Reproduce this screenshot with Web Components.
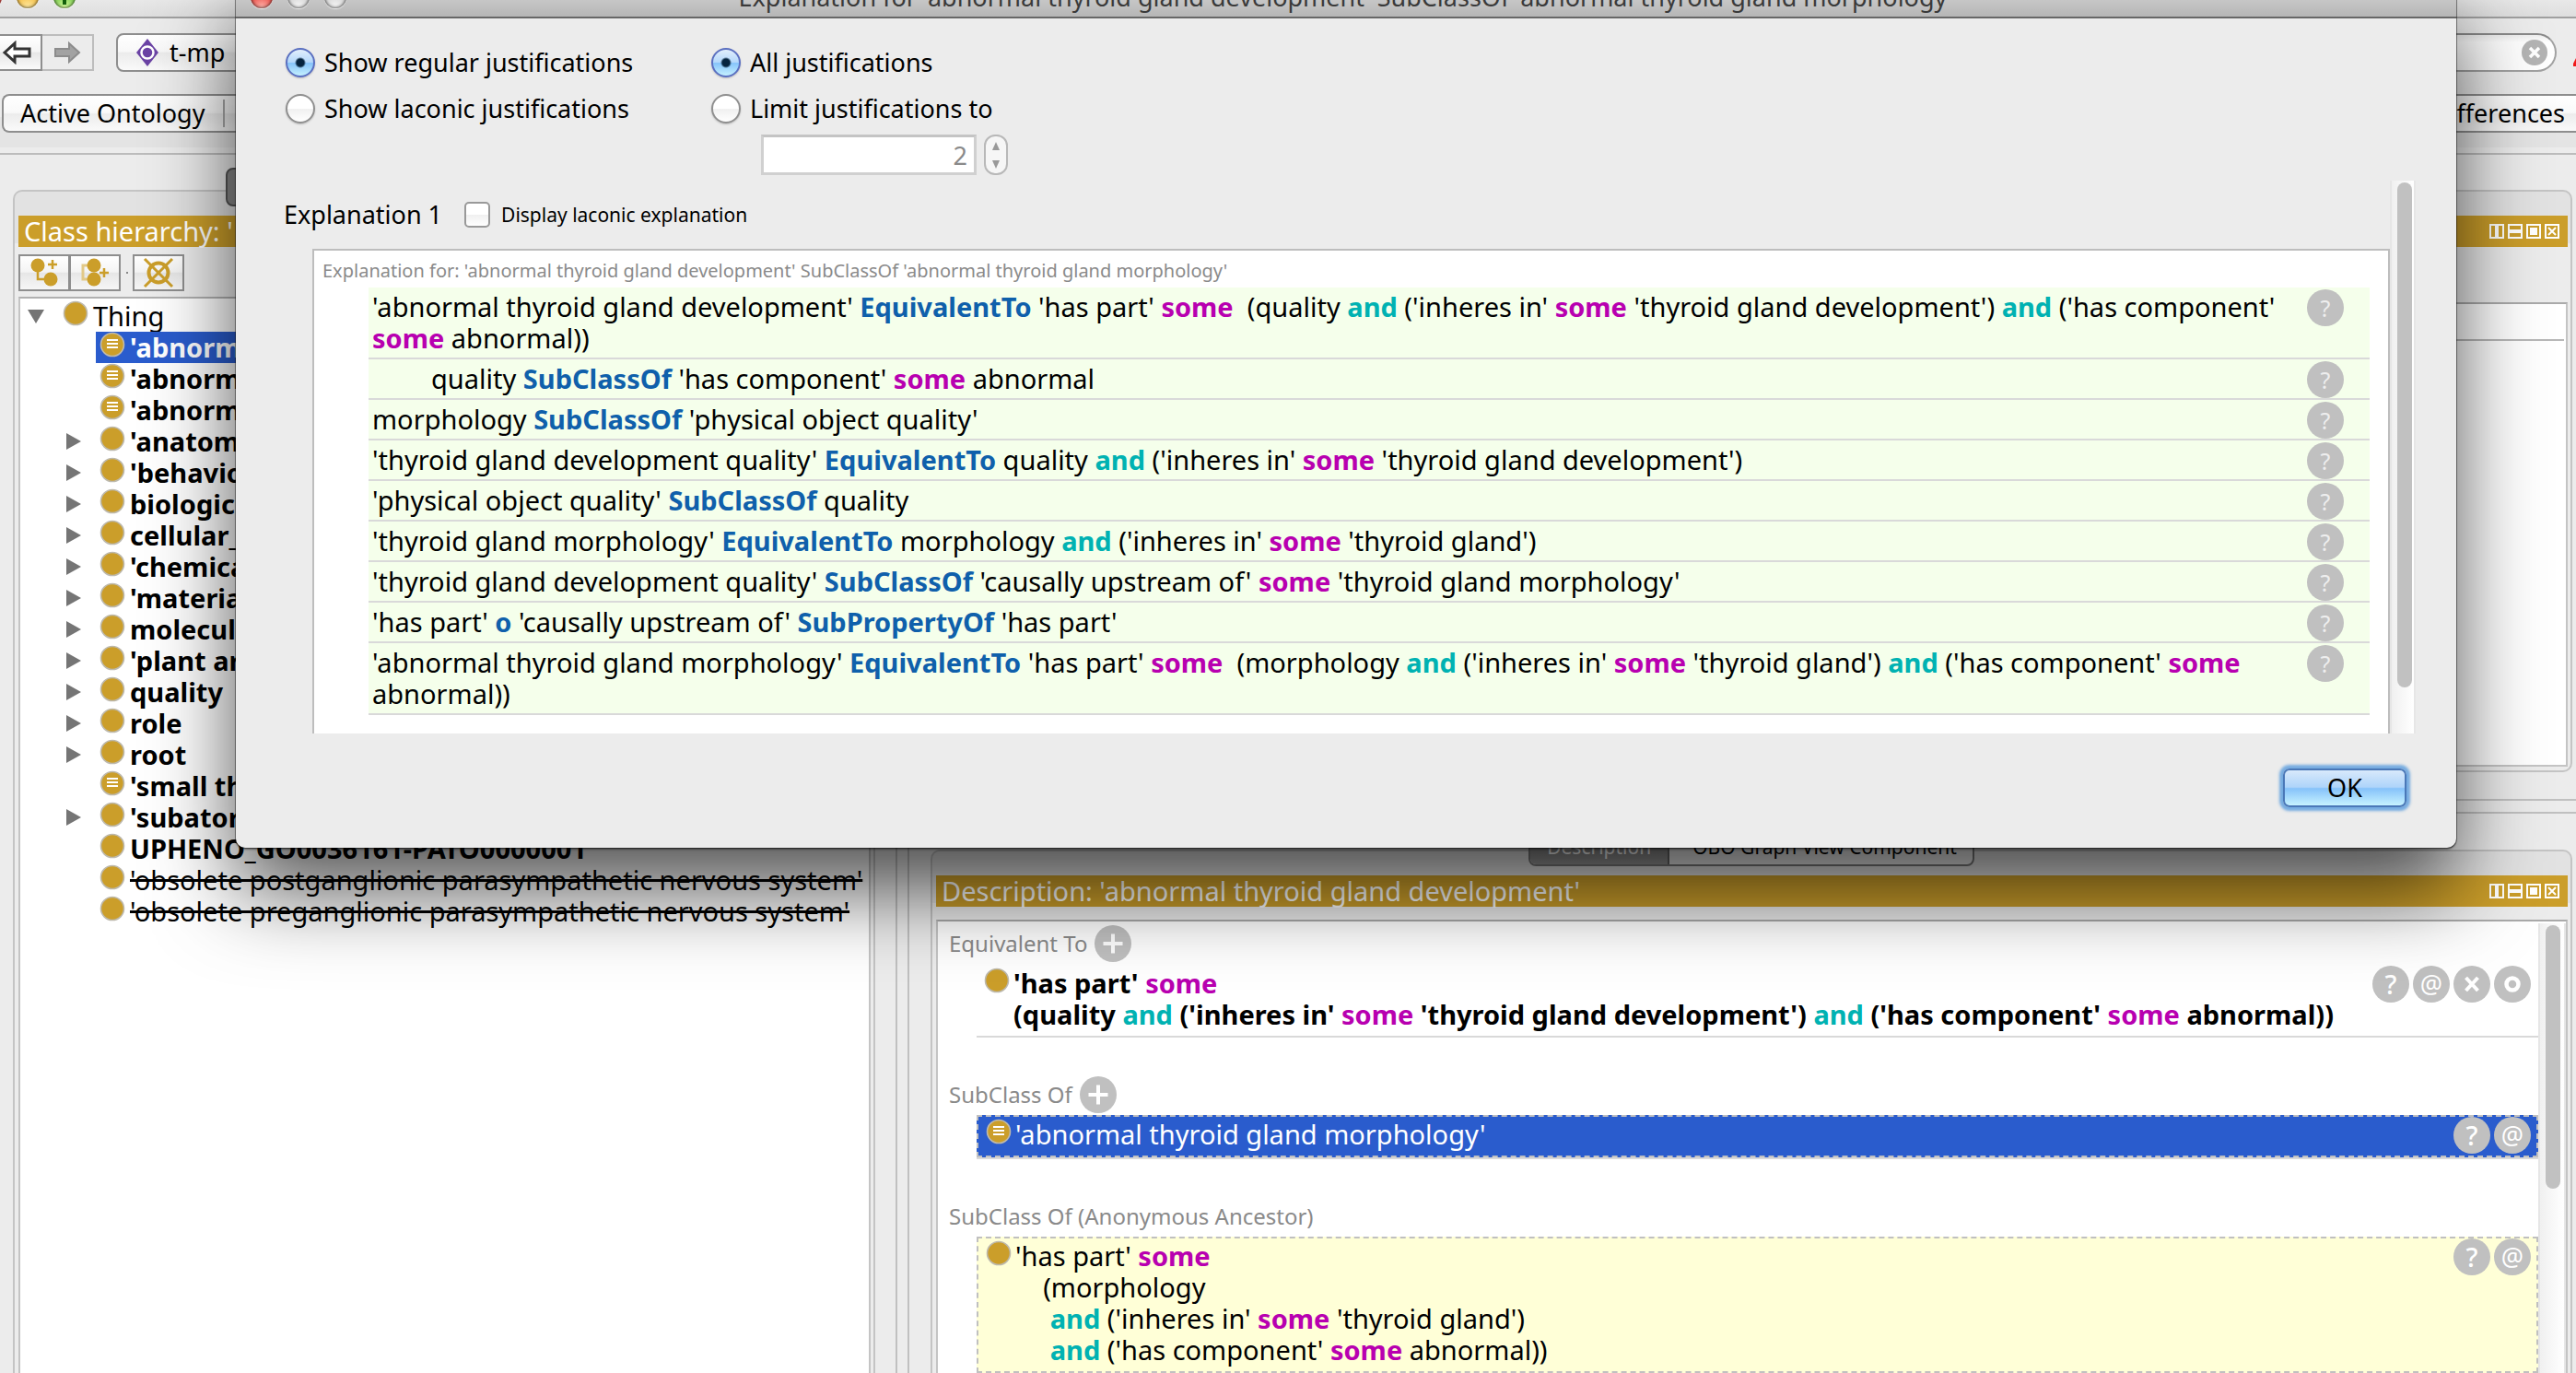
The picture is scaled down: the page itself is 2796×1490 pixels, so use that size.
<!DOCTYPE html>
<html lang="en">
<head>
<meta charset="utf-8">
<title>Ontology editor</title>
<style>
  html, body { margin: 0; height: 100%; overflow: hidden; background: #ececec; }
  body { font-family: "Noto Sans", "Open Sans", sans-serif; font-size: 29px; line-height: 34px; color: #000; }
</style>
</head>
<body>
<ontology-app></ontology-app>

<script>
const define = (name, html, init) => {
  const template = document.createElement('template');
  template.innerHTML = html.trim();
  customElements.define(name, class extends HTMLElement {
    connectedCallback() {
      if (this.shadowRoot) return;
      const root = this.attachShadow({ mode: 'open' });
      const content = template.content.cloneNode(true);
      if (init) init(this, content);
      root.append(content);
    }
  });
};

/* Class marker: a gold disc, with three bars when the class is defined */
define('class-icon', `
<style>
  :host { display: block; flex: none; width: 28px; height: 28px; }
  svg { display: block; }
  .bars { display: none; }
  :host([defined]) .bars { display: block; }
</style>
<svg width="28" height="28" viewBox="0 0 28 28">
  <circle cx="14" cy="14" r="12.5" fill="#cb9e2a" stroke="#bdb9ad" stroke-width="1.6"/>
  <path class="bars" d="M8 9h12M8 13h12M8 17h12" stroke="#fff" stroke-width="2"/>
</svg>`);

/* Class expression with coloured keywords */
define('manchester-text', `
<style>
  :host { display: block; }
  p { margin: 0; white-space: pre-wrap; }
  b { font-weight: 700; }
  .axiom { color: #0f60ab; }
  .some { color: #b800b0; }
  .and { color: #00b2b2; }
</style>
<p></p>`, (host, root) => {
  const out = root.querySelector('p');
  host.getAttribute('expr').split(/\b(EquivalentTo|SubClassOf|SubPropertyOf|some|and|o)\b/).forEach(part => {
    const kind = { EquivalentTo: 'axiom', SubClassOf: 'axiom', SubPropertyOf: 'axiom', o: 'axiom', some: 'some', and: 'and' }[part];
    if (!kind) return out.append(part);
    const b = document.createElement('b');
    b.className = kind;
    b.textContent = part;
    out.append(b);
  });
});

/* Round grey action button */
define('round-button', `
<style>
  :host { display: block; flex: none; width: 40px; height: 40px; }
  button { all: unset; box-sizing: border-box; width: 40px; height: 40px; border-radius: 50%; background: #c0c0c0; color: #fff;
    display: flex; align-items: center; justify-content: center; font-size: 29px; line-height: 40px; font-weight: 500; }
  :host([kind="note"]) button { font-size: 27px; font-weight: 400; line-height: 40px; }
  :host([light]) button { font-size: 25px; font-weight: 400; color: #eee; }
  svg { display: block; }
</style>
<button type="button"></button>`, (host, root) => {
  const kind = host.getAttribute('kind');
  const b = root.querySelector('button');
  const icons = {
    add: '<path d="M20 9.500v21M9.500 20h21" stroke-width="4"/>',
    remove: '<path d="M13.500 13l13 14M26.500 13l-13 14" stroke-width="4"/>',
    edit: '<circle cx="20" cy="20" r="6.500" stroke-width="4.500"/>'
  };
  b.setAttribute('aria-label', { help: 'Explain', note: 'Annotate', add: 'Add', remove: 'Remove', edit: 'Edit' }[kind]);
  if (icons[kind]) b.innerHTML = '<svg width="40" height="40" viewBox="0 0 40 40" fill="none" stroke="#fff">' + icons[kind] + '</svg>';
  else b.textContent = kind === 'help' ? '?' : '@';
});

define('traffic-lights', `
<style>
  :host { display: flex; gap: 16px; }
  i { width: 24px; height: 24px; border-radius: 50%; box-sizing: border-box; box-shadow: inset 0 0 3px 1px rgba(0,0,0,.55), 0 1px 1px rgba(255,255,255,.7); }
  .r { background: radial-gradient(circle at 50% 95%, #ffb0a8, #e8453f 60%, #b82018); }
  .y { background: radial-gradient(circle at 50% 95%, #ffe9a0, #f3b93a 60%, #b07d12); }
  .g { background: radial-gradient(circle at 50% 95%, #d8ff9c, #6fc447 60%, #3c8a1e); display: flex; justify-content: center; }
  .g::before { content: ""; width: 4px; height: 18px; margin-top: 2px; background: #14600c; }
  .n { background: radial-gradient(circle at 50% 90%, #f4f4f4, #cfcfcf 60%, #aaa); }
</style>
<i class="r"></i><i class="y"></i><i class="g"></i>`, (host, root) => {
  if (host.hasAttribute('modal')) root.querySelectorAll('.y,.g').forEach(n => n.className = 'n');
});

define('tool-bar', `
<style>
  :host { display: flex; align-items: center; padding: 16px 0 0; height: 42px; overflow: hidden; font-size: 27px; }
  .nav { display: flex; margin-left: -10px; margin-right: 24px; }
  .nav button { box-sizing: border-box; width: 56px; height: 40px; padding: 0; border: 2px solid #8e8e8e; background: linear-gradient(#fff, #f4f4f4 48%, #e6e6e6 50%, #fafafa); }
  .nav button:disabled { border-color: #bdbdbd; border-left: 0; background: #ececec; }
  .nav svg { display: block; margin: auto; }
  .project { all: unset; box-sizing: border-box; flex: 1; height: 42px; display: flex; align-items: center; gap: 10px; padding-left: 18px;
    border: 2px solid #8e8e8e; border-radius: 8px; background: linear-gradient(#fff, #f8f8f8 48%, #ebebeb 50%, #fafafa); }
  .search { box-sizing: border-box; width: 600px; height: 42px; margin: 0 18px 0 24px; border: 2px solid #a2a2a2; border-top-color: #8a8a8a; border-radius: 21px;
    display: flex; align-items: center; padding-right: 8px; background: linear-gradient(#eee, #fff 8px); }
  .search input { flex: 1; min-width: 0; border: 0; outline: 0; background: none; }
  .search button { all: unset; display: flex; }
  .warn { flex: none; width: 3px; overflow: hidden; }
</style>
<div class="nav">
  <button aria-label="Back"><svg width="32" height="26" viewBox="0 0 32 26"><path d="M3 13L14 3v6h16v8H14v6z" fill="#fff" stroke="#333" stroke-width="3"/></svg></button>
  <button aria-label="Forward" disabled><svg width="32" height="26" viewBox="0 0 32 26"><path d="M29 13L18 3v6H3v8h15v6z" fill="#a2a2a2" stroke="#8c8c8c" stroke-width="2"/></svg></button>
</div>
<button class="project"><svg width="28" height="32" viewBox="0 0 28 32"><path d="M14 1l12 15-12 15L2 16z" fill="#6b43a5"/><circle cx="14" cy="16" r="6.500" fill="none" stroke="#fff" stroke-width="2.500"/></svg><span>t-mp</span></button>
<div class="search"><input aria-label="Search"><button aria-label="Clear"><svg width="28" height="28" viewBox="0 0 28 28"><circle cx="14" cy="14" r="14" fill="#b4b4b4"/><path d="M9 9l10 10M19 9L9 19" stroke="#fff" stroke-width="3.500"/></svg></button></div>
<svg class="warn" width="3" height="42" viewBox="0 0 3 42"><path d="M0 36V33l3-6v9z" fill="#f01818"/></svg>`);

define('tab-strip', `
<style>
  :host { display: block; margin-top: 24px; height: 64px; border-bottom: 2px solid #bcbcbc; font-size: 27px;
    background: linear-gradient(transparent 25px, #e4e4e4 25px, #e4e4e4 58px, transparent 58px); }
  nav { display: flex; height: 42px; box-sizing: border-box; margin-left: 2px; border: 2px solid #8e8e8e; border-right: 0; border-radius: 8px 0 0 8px;
    background: linear-gradient(#fff, #f9f9f9 48%, #ececec 52%, #fafafa); justify-content: space-between; align-items: center; }
  button { all: unset; padding: 0 18px; line-height: 30px; }
  button:first-of-type { padding-right: 20px; border-right: 2px solid #aaa; }
  button:last-of-type { padding-right: 12px; }
</style>
<nav><button>Active Ontology</button><button>fferences</button></nav>`);

/* Framed view with optional tabs over its top edge and a gold caption */
define('view-panel', `
<style>
  :host { display: flex; flex-direction: column; position: relative; box-sizing: border-box; border: 2px solid #c4c4c4; border-radius: 10px; padding: 26px 3px 4px 4px;
    background: linear-gradient(#e2e2e2 56px, #ececec 56px); min-width: 0; }
  .caption { flex: none; height: 34px; display: flex; align-items: center; padding: 0 9px 0 6px; background: #cb9e2a; color: #fff; white-space: nowrap; }
  .caption span { flex: 1; }
  svg { display: block; flex: none; }
  .tabs { position: absolute; left: 0; right: 0; top: -26px; display: flex; justify-content: center; }
</style>
<div class="tabs"><slot name="tabs"></slot></div>
<div class="caption"><span></span>
<svg width="76" height="16" viewBox="0 0 76 16" fill="none" stroke="#fff" stroke-width="2">
  <path d="M1 1h14v14H1zM21 1h14v14H21zM41 1h14v14H41zM61 1h14v14H61z"/>
  <path d="M8 1v14" stroke-width="4"/><path d="M21 8h14" stroke-width="4"/><path d="M44 4h8v8h-8z" fill="#fff" stroke="none"/><path d="M64 4l8 8M72 4l-8 8"/>
</svg></div>
<slot></slot>`, (host, root) => { root.querySelector('.caption span').textContent = host.getAttribute('caption'); });

define('segment-tabs', `
<style>
  :host { display: flex; border: 2px solid #7a7a7a; border-radius: 8px; overflow: hidden; height: 38px; background: #ececec; font-size: 21px; }
  button { all: unset; box-sizing: border-box; padding: 0 18px; line-height: 34px; white-space: nowrap; }
  button:first-of-type { background: linear-gradient(#6e6e6e, #9c9c9c); color: #fff; border-right: 2px solid #666; }
  button:last-of-type { padding: 0 17px 0 25px; }
</style>
<button>Description</button><button>OBO Graph View Component</button>`);

define('tree-item', `
<style>
  :host { display: flex; height: 34px; align-items: flex-start; white-space: nowrap; font-weight: 700; }
  .arrow { flex: none; width: 34px; height: 34px; margin-left: 48px; }
  .arrow path { fill: #757575; display: none; }
  .body { flex: 1; display: flex; padding-left: 4px; gap: 5px; min-width: 0; }
  :host([root]) { font-weight: 400; }
  :host([root]) .arrow { margin-left: 8px; }
  :host([open]) .down, :host([closed]) .right { display: block; }
  :host([selected]) .body { background: #2a5ccd; color: #fff; }
  :host([obsolete]) { font-weight: 400; }
  :host([obsolete]) span { text-decoration: line-through 3px; }
</style>
<svg class="arrow" viewBox="0 0 34 34"><path class="down" d="M0 10h18l-9 15z"/><path class="right" d="M2 8v18l16-9z"/></svg>
<div class="body"><class-icon></class-icon><span><slot></slot></span></div>`, (host, root) => {
  if (host.hasAttribute('defined')) root.querySelector('class-icon').setAttribute('defined', '');
});

define('class-tree', `
<style>
  :host { display: flex; flex-direction: column; flex: 1; min-height: 0; }
  .bar { display: flex; align-items: center; margin: 8px 0 6px; }
  .bar button { box-sizing: border-box; width: 56px; height: 40px; padding: 0; border: 2px solid #8e8e8e; background: linear-gradient(#fff, #f4f4f4 48%, #e6e6e6 50%, #f6f6f6); }
  .bar button + button { margin-left: -1px; }
  .bar svg { display: block; margin: auto; }
  .dot { width: 2px; height: 2px; margin: 0 5px 0 6px; background: #888; }
  .list { flex: 1; border: 2px solid #b0b0b0; border-color: #b0b0b0 #c4c4c4; border-bottom: 0; background: #fff; padding-top: 2px; overflow: hidden; }
</style>
<div class="bar">
  <button aria-label="Add subclass"><svg width="34" height="34" viewBox="0 0 34 34" fill="#cb9e2a"><circle cx="10" cy="9" r="7.500"/><circle cx="24" cy="24" r="7.500"/><path d="M10 9v15h12M21 8h10M26 3v10" fill="none" stroke="#cb9e2a" stroke-width="2.500"/></svg></button><button aria-label="Add sibling class"><svg width="34" height="34" viewBox="0 0 34 34"><path d="M14 9H4v15h10" fill="none" stroke="#e2c988" stroke-width="3"/><g fill="#cb9e2a"><circle cx="16" cy="9" r="7.500"/><circle cx="16" cy="24" r="7.500"/></g><path d="M22 17h10M27 12v10" fill="none" stroke="#cb9e2a" stroke-width="2.500"/></svg></button>
  <span class="dot"></span>
  <button aria-label="Delete class"><svg width="34" height="34" viewBox="0 0 34 34" fill="none" stroke="#cb9e2a" stroke-width="3"><circle cx="17" cy="17" r="10.500" stroke-width="4"/><path d="M2 2l30 30M32 2L2 32"/></svg></button>
</div>
<div class="list">
  <tree-item root open>Thing</tree-item>
  <tree-item selected defined>'abnorm</tree-item>
  <tree-item defined>'abnorm</tree-item>
  <tree-item defined>'abnorm</tree-item>
  <tree-item closed>'anatom</tree-item>
  <tree-item closed>'behavio</tree-item>
  <tree-item closed>biologic</tree-item>
  <tree-item closed>cellular_</tree-item>
  <tree-item closed>'chemica</tree-item>
  <tree-item closed>'materia</tree-item>
  <tree-item closed>molecul</tree-item>
  <tree-item closed>'plant ar</tree-item>
  <tree-item closed>quality</tree-item>
  <tree-item closed>role</tree-item>
  <tree-item closed>root</tree-item>
  <tree-item defined>'small th</tree-item>
  <tree-item closed>'subator</tree-item>
  <tree-item>UPHENO_GO0036161-PATO0000001</tree-item>
  <tree-item obsolete>'obsolete postganglionic parasympathetic nervous system'</tree-item>
  <tree-item obsolete>'obsolete preganglionic parasympathetic nervous system'</tree-item>
</div>`);

define('scroll-bar', `
<style>
  :host { display: block; flex: none; box-sizing: border-box; width: 30px; padding: 2px 6px; border: 2px solid #e6e6e6; border-width: 0 2px; background: linear-gradient(90deg, #f0f0f0, #fff); }
  div { width: 16px; height: var(--thumb, 50%); border-radius: 8px; background: #c1c1c1; margin: auto; }
</style>
<div></div>`);

define('description-section', `
<style>
  :host { display: block; margin-bottom: 40px; }
  header { display: flex; align-items: center; gap: 8px; height: 44px; padding-left: 12px; color: #8a8a8a; font-size: 24px; }
  .items { padding-left: 42px; }
</style>
<header><span></span></header><div class="items"><slot></slot></div>`, (host, root) => {
  root.querySelector('span').textContent = host.getAttribute('name');
  if (host.hasAttribute('addable')) {
    const add = document.createElement('round-button');
    add.setAttribute('kind', 'add');
    root.querySelector('header').append(add);
  }
});

define('description-item', `
<style>
  :host { display: block; border-bottom: 2px solid #d9d9d9; }
  .row { display: flex; gap: 4px; padding: 2px 8px; }
  class-icon { margin-top: 2px; }
  manchester-text { flex: 1; padding: 2px 0 4px; }
  :host([bold]) { font-weight: 700; }
  :host([inferred]) .row { padding: 0 6px 0 8px; border: 2px dashed #c0c0c0; background: #ffffd7; }
  :host([inferred]) manchester-text { padding: 2px 0 6px; }
  :host([selected]) .row { background: #2a5ccd; color: #fff; }
</style>
<div class="row"><class-icon></class-icon><manchester-text></manchester-text></div>`, (host, root) => {
  root.querySelector('manchester-text').setAttribute('expr', host.getAttribute('expr').replaceAll('|', '\n'));
  if (host.hasAttribute('defined')) root.querySelector('class-icon').setAttribute('defined', '');
  for (const kind of host.getAttribute('actions').split(' ')) {
    const b = document.createElement('round-button');
    b.setAttribute('kind', kind);
    root.querySelector('.row').append(b);
  }
});

define('description-view', `
<style>
  :host { flex: 1; min-height: 0; display: flex; margin-top: 14px; border: 2px solid #b4b4b4; border-color: #aaa #c4c4c4; border-bottom: 0; background: #fff; padding-top: 2px; overflow: hidden; }
  .body { flex: 1; min-width: 0; }
  scroll-bar { --thumb: 286px; }
</style>
<div class="body">
  <description-section name="Equivalent To" addable>
    <description-item bold actions="help note remove edit" expr="'has part' some|(quality and ('inheres in' some 'thyroid gland development') and ('has component' some abnormal))"></description-item>
  </description-section>
  <description-section name="SubClass Of" addable>
    <description-item inferred selected defined actions="help note" expr="'abnormal thyroid gland morphology'"></description-item>
  </description-section>
  <description-section name="SubClass Of (Anonymous Ancestor)">
    <description-item inferred actions="help note" expr="'has part' some|    (morphology|     and ('inheres in' some 'thyroid gland')|     and ('has component' some abnormal))"></description-item>
  </description-section>
</div>
<scroll-bar></scroll-bar>`);

define('annotations-view', `
<style>
  :host { flex: 1; display: block; margin-top: 60px; border: 2px solid #aaa; border-color: #aaa #c4c4c4 #c4c4c4; background: #fff; }
  div { height: 38px; border-bottom: 2px solid #b8b8b8; margin-right: 2px; }
</style>
<div></div>`);

define('axiom-row', `
<style>
  :host { display: flex; background: #f5ffeb; border-bottom: 2px solid #d9d9d9; padding: 0 28px 0 4px; }
  manchester-text { flex: 1; min-width: 0; padding: 4px 16px 4px 0; }
  :host([nested]) manchester-text { padding-left: 64px; }
  round-button { margin-top: 2px; }
</style>
<manchester-text></manchester-text><round-button kind="help" light></round-button>`, (host, root) => {
  root.querySelector('manchester-text').setAttribute('expr', host.getAttribute('expr'));
});

define('option-radio', `
<style>
  :host { display: block; }
  label { display: flex; align-items: center; gap: 10px; height: 32px; }
  input { appearance: none; margin: 0; width: 32px; height: 32px; border: 2px solid #8f8f8f; border-radius: 50%; background: linear-gradient(#fff, #fff 50%, #f0f0f0 52%, #fff); box-shadow: 0 1px 2px rgba(0,0,0,.2); }
  input:checked { border-color: #5a6fc0; background: radial-gradient(circle, #06243f 4px, transparent 6px), linear-gradient(#e2effc, #b4d8fb 48%, #87c4fa 52%, #c4f0ff); }
</style>
<label><input type="radio"><span></span></label>`, (host, root) => {
  root.querySelector('input').checked = host.hasAttribute('checked');
  root.querySelector('span').textContent = host.getAttribute('label');
});

define('explanation-dialog', `
<style>
  :host { display: block; background: #ececec; border-radius: 10px; font-size: 27px;
    box-shadow: 0 0 0 1px rgba(0,0,0,.35), 0 2px 2px rgba(0,0,0,.4), 0 46px 90px rgba(0,0,0,.68); }
  .title { height: 42px; display: grid; grid-template-columns: 1fr auto 1fr; align-items: center; padding: 0 16px; color: #3a3a3a; border-bottom: 2px solid #676767;
    border-radius: 10px 10px 0 0; background: linear-gradient(#dcdcdc, #b6b6b6); white-space: nowrap; }
  .options { display: flex; padding: 32px 0 0 54px; }
  .col { display: flex; flex-direction: column; gap: 18px; width: 462px; }
  .limit { display: flex; gap: 8px; margin: -6px 0 0 54px; }
  .limit input { box-sizing: border-box; width: 234px; height: 44px; border: 3px solid #d0d0d0; border-top-color: #c4c4c4; background: #fff; color: #8a8a8a; font: inherit; text-align: right; padding: 0 7px; }
  .step { box-sizing: border-box; width: 26px; height: 44px; border: 2px solid #b8b8b8; border-radius: 12px; background: #f6f6f6; display: flex; flex-direction: column; }
  .step button { all: unset; flex: 1; display: flex; align-items: center; justify-content: center; }
  .pane { display: flex; margin: 6px 44px 0 52px; }
  .content { flex: 1; min-width: 0; }
  .head { display: flex; align-items: center; height: 74px; gap: 24px; }
  .head label { display: flex; align-items: center; gap: 12px; font-size: 21px; }
  .head input { appearance: none; margin: 0; width: 28px; height: 28px; border: 2px solid #999; border-radius: 5px; background: linear-gradient(#fff, #fff 50%, #f0f0f0 52%, #fff); }
  .box { margin-left: 31px; background: #fff; border: 2px solid #bdbdbd; border-bottom: 0; padding: 0 20px 20px 59px; font-size: 29px; }
  .for { height: 40px; line-height: 44px; margin-left: -50px; font-size: 20px; color: #8a8a8a; }
  scroll-bar { --thumb: 92%; width: 28px; }
  footer { display: flex; justify-content: flex-end; padding: 38px 54px 44px; }
  .ok { box-sizing: border-box; width: 134px; height: 42px; padding: 0; font: inherit; line-height: 38px; color: #000; border: 2px solid #4a78b8; border-radius: 7px;
    background: linear-gradient(#d8e9fb, #aed4fa 48%, #86c2fa 52%, #c6f2ff); box-shadow: 0 0 3px 4px rgba(96,160,222,.85); }
</style>
<div class="title"><traffic-lights modal></traffic-lights><span>Explanation for 'abnormal thyroid gland development' SubClassOf 'abnormal thyroid gland morphology'</span></div>
<div class="options">
  <div class="col"><option-radio checked label="Show regular justifications"></option-radio><option-radio label="Show laconic justifications"></option-radio></div>
  <div class="col"><option-radio checked label="All justifications"></option-radio><option-radio label="Limit justifications to"></option-radio>
    <div class="limit"><input type="text" value="2" disabled aria-label="Justification limit">
      <span class="step"><button aria-label="More"><svg width="10" height="9"><path d="M5 0l4 9H1z" fill="#999"/></svg></button><button aria-label="Fewer"><svg width="10" height="9"><path d="M5 9l4-9H1z" fill="#999"/></svg></button></span>
    </div></div>
</div>
<div class="pane">
  <div class="content">
    <div class="head"><span>Explanation 1</span><label><input type="checkbox"><span>Display laconic explanation</span></label></div>
    <div class="box">
      <div class="for">Explanation for: 'abnormal thyroid gland development' SubClassOf 'abnormal thyroid gland morphology'</div>
      <axiom-row expr="'abnormal thyroid gland development' EquivalentTo 'has part' some  (quality and ('inheres in' some 'thyroid gland development') and ('has component' some abnormal))"></axiom-row>
      <axiom-row nested expr="quality SubClassOf 'has component' some abnormal"></axiom-row>
      <axiom-row expr="morphology SubClassOf 'physical object quality'"></axiom-row>
      <axiom-row expr="'thyroid gland development quality' EquivalentTo quality and ('inheres in' some 'thyroid gland development')"></axiom-row>
      <axiom-row expr="'physical object quality' SubClassOf quality"></axiom-row>
      <axiom-row expr="'thyroid gland morphology' EquivalentTo morphology and ('inheres in' some 'thyroid gland')"></axiom-row>
      <axiom-row expr="'thyroid gland development quality' SubClassOf 'causally upstream of' some 'thyroid gland morphology'"></axiom-row>
      <axiom-row expr="'has part' o 'causally upstream of' SubPropertyOf 'has part'"></axiom-row>
      <axiom-row expr="'abnormal thyroid gland morphology' EquivalentTo 'has part' some  (morphology and ('inheres in' some 'thyroid gland') and ('has component' some abnormal))"></axiom-row>
    </div>
  </div>
  <scroll-bar></scroll-bar>
</div>
<footer><button class="ok">OK</button></footer>`);

define('ontology-app', `
<style>
  :host { display: flex; flex-direction: column; position: relative; height: 100vh; overflow: hidden; background: #ececec; }
  .title { flex: none; height: 42px; margin-top: -24px; border-bottom: 2px solid #a0a0a0; background: linear-gradient(#f6f6f6, #dedede); display: flex; align-items: center; }
  .title traffic-lights { margin-left: -22px; }
  tool-bar, tab-strip { flex: none; }
  .work { flex: 1; min-height: 0; display: flex; padding: 38px 4px 0 14px; }
  .left { flex: 0 0 936px; border-bottom: 0; border-radius: 10px 10px 0 0; padding-bottom: 0; }
  .vsplit { flex: none; width: 11px; margin: -38px 23px 0 22px; border: 2px solid #c0c0c0; border-width: 0 2px; }
  .right { flex: 1; min-width: 0; display: flex; flex-direction: column; }
  .upper { flex: none; height: 632px; }
  .hsplit { flex: none; height: 12px; margin: 29px -4px 39px -23px; border: 2px solid #c0c0c0; border-width: 2px 0; }
  .lower { flex: 1; min-height: 0; border-bottom: 0; border-radius: 10px 10px 0 0; padding-bottom: 0; }
  .stub { box-sizing: border-box; width: 474px; height: 42px; border: 2px solid #555; border-radius: 8px; background: #8a8a8a; }
  explanation-dialog { position: absolute; top: -24px; left: 256px; right: 130px; }
</style>
<div class="title"><traffic-lights></traffic-lights></div>
<tool-bar></tool-bar>
<tab-strip></tab-strip>
<div class="work">
  <view-panel class="left" caption="Class hierarchy: '"><div class="stub" slot="tabs"></div><class-tree></class-tree></view-panel>
  <div class="vsplit"></div>
  <div class="right">
    <view-panel class="upper" caption=""><annotations-view></annotations-view></view-panel>
    <div class="hsplit"></div>
    <view-panel class="lower" caption="Description: 'abnormal thyroid gland development'"><segment-tabs slot="tabs"></segment-tabs><description-view></description-view></view-panel>
  </div>
</div>
<explanation-dialog></explanation-dialog>`);
</script>
</body>
</html>
